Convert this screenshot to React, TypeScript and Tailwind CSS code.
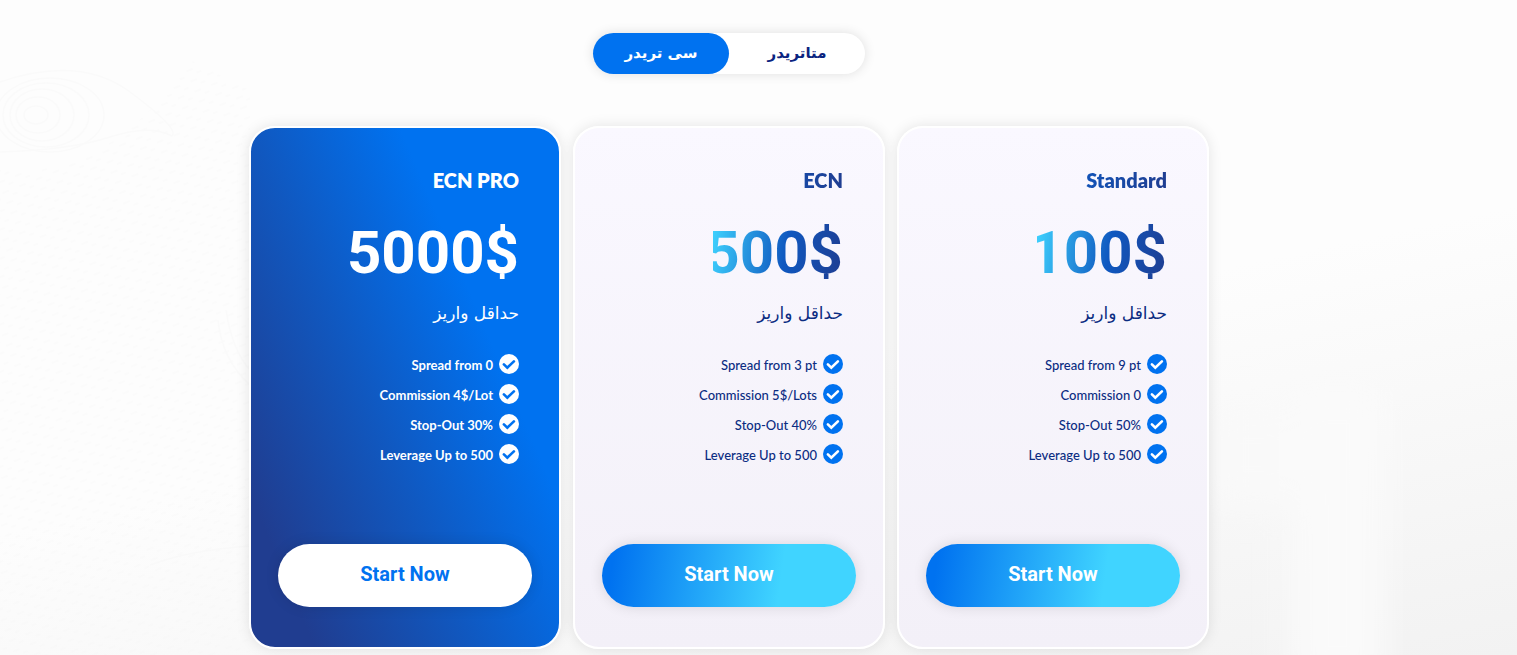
import React, { useState } from "react";
import clsx from "clsx";

const platforms = ["متاتریدر", "سی تریدر"];

const plans = [
  {
    name: "Standard",
    price: "100$",
    features: ["Spread from 9 pt", "Commission 0", "Stop-Out 50%", "Leverage Up to 500"],
    featured: false
  },
  {
    name: "ECN",
    price: "500$",
    features: ["Spread from 3 pt", "Commission 5$/Lots", "Stop-Out 40%", "Leverage Up to 500"],
    featured: false
  },
  {
    name: "ECN PRO",
    price: "5000$",
    features: ["Spread from 0", "Commission 4$/Lot", "Stop-Out 30%", "Leverage Up to 500"],
    featured: true
  }
];

type Plan = (typeof plans)[number];

function CheckIcon({ featured }: { featured: boolean }) {
  return (
    <svg viewBox="0 0 20 20" className="size-5 shrink-0" aria-hidden="true">
      <circle cx="10" cy="10" r="10" fill={featured ? "#fff" : "#0072f0"} />
      <path
        d="M4.9 10.4 8.3 13.7 14.9 7.4"
        fill="none"
        stroke={featured ? "#0072f0" : "#fff"}
        strokeWidth="2.6"
        strokeLinecap="round"
        strokeLinejoin="miter"
      />
    </svg>
  );
}

// Faint engraving on the left, soft skyline on the right
function Backdrop() {
  return (
    <svg
      className="absolute inset-0 -z-10 h-full w-full"
      viewBox="0 0 1517 655"
      preserveAspectRatio="xMidYMid slice"
      aria-hidden="true"
    >
      <defs>
        <pattern id="dashes" width="18" height="11" patternUnits="userSpaceOnUse" patternTransform="rotate(-22)">
          <path d="M2 4h7M11 9h5" stroke="#f9f9f9" strokeWidth="1" />
        </pattern>
        <linearGradient id="floor" x1="0.5" y1="0" x2="1" y2="1">
          <stop offset="0.45" stopColor="#f2f2f2" stopOpacity="0" />
          <stop offset="1" stopColor="#f2f2f2" />
        </linearGradient>
        <filter id="soft">
          <feGaussianBlur stdDeviation="16" />
        </filter>
      </defs>
      <rect width="1517" height="655" fill="#fdfdfd" />
      <path d="M0 170Q110 180 190 60L250 90V655H0Z" fill="url(#dashes)" />
      <g fill="none" stroke="#fafafa" strokeWidth="1.5">
        <path d="M0 82Q80 55 130 92T172 136" />
        <path d="M0 152Q70 150 110 137T172 136" />
        <ellipse cx="36" cy="115" rx="12" ry="9" />
        <ellipse cx="38" cy="115" rx="22" ry="18" />
        <ellipse cx="42" cy="115" rx="32" ry="26" />
        <ellipse cx="46" cy="115" rx="43" ry="32" />
        <ellipse cx="50" cy="115" rx="54" ry="37" />
        <path d="M218 320Q222 360 250 385M226 310Q232 350 250 370" />
        <path d="M150 565Q190 550 250 546" />
      </g>
      <rect width="1517" height="655" fill="url(#floor)" />
      <g filter="url(#soft)">
        <path d="M1290 385h95v300h-95z" fill="#fafafa" />
        <path d="M1210 405h80v100h-80z" fill="#f9f9f9" />
      </g>
    </svg>
  );
}

function PlanCard({ plan }: { plan: Plan }) {
  const { name, price, features, featured } = plan;
  const gradientText =
    "bg-[linear-gradient(100deg,#3fd3ff_0%,#0f58c0_55%,#203d90_100%)] bg-clip-text text-transparent";

  return (
    <article
      className={clsx(
        "flex flex-col rounded-[26px] border-2 border-white px-[27px] pt-[37px] pb-10 shadow-[0_0_14px_rgba(0,0,0,0.10)]",
        featured
          ? "bg-[linear-gradient(67deg,#203d90_12%,#1058c0_42%,#0072f0_70%)] text-white"
          : "bg-linear-to-b from-[#faf8ff] to-[#f3f0f8] text-[#0b2c82]"
      )}
    >
      <div className="px-[13px]">
        <h2
          className={clsx(
            "font-['Lato',sans-serif] text-xl leading-[30px] font-extrabold",
            !featured && gradientText
          )}
        >
          {name}
        </h2>
        <p
          className={clsx(
            "mt-[26px] font-['Roboto',sans-serif] text-[60px] leading-[64px] font-bold",
            !featured && "w-[130px]",
            !featured && gradientText
          )}
        >
          {price}
        </p>
        <p className="mt-3 font-['DejaVu_Sans',sans-serif] text-[17px] leading-8">حداقل واریز</p>
        <ul className="mt-6 flex flex-col gap-2">
          {features.map((feature) => (
            <li
              key={feature}
              className={clsx(
                "flex items-center gap-[6px] font-['Lato',sans-serif] text-[13px] leading-5",
                featured ? "font-bold" : "font-medium"
              )}
            >
              <CheckIcon featured={featured} />
              <span dir="ltr" className="pt-[2px]">{feature}</span>
            </li>
          ))}
        </ul>
      </div>
      <button
        type="button"
        className={clsx(
          "mt-[79px] h-[63px] w-full cursor-pointer rounded-full pb-[3px] font-['Roboto',sans-serif] text-xl font-bold shadow-[0_0_14px_rgba(0,0,0,0.12)]",
          featured
            ? "bg-white text-[#0072f0]"
            : "bg-[linear-gradient(98deg,#0072f0_5%,#40d4ff_70%)] text-white"
        )}
      >
        Start Now
      </button>
    </article>
  );
}

export default function App() {
  const [platform, setPlatform] = useState(platforms[1]);

  return (
    <main
      dir="rtl"
      className="relative isolate flex min-h-screen flex-col items-center gap-[52px] overflow-hidden pt-[33px] pr-[59px] pb-[6px]"
    >
      <Backdrop />
      <div className="flex rounded-full bg-white shadow-[0_0_12px_rgba(0,0,0,0.12)]">
        {platforms.map((item) => (
          <button
            key={item}
            type="button"
            aria-pressed={platform === item}
            onClick={() => setPlatform(item)}
            className={clsx(
              "h-[41px] w-[136px] cursor-pointer rounded-full font-['DejaVu_Sans',sans-serif] text-[15px] font-bold",
              platform === item ? "bg-[#0072f0] text-white" : "text-[#0b2480]"
            )}
          >
            {item}
          </button>
        ))}
      </div>
      <section className="grid w-full max-w-[960px] grid-cols-3 gap-3">
        {plans.map((plan) => (
          <PlanCard key={plan.name} plan={plan} />
        ))}
      </section>
    </main>
  );
}
